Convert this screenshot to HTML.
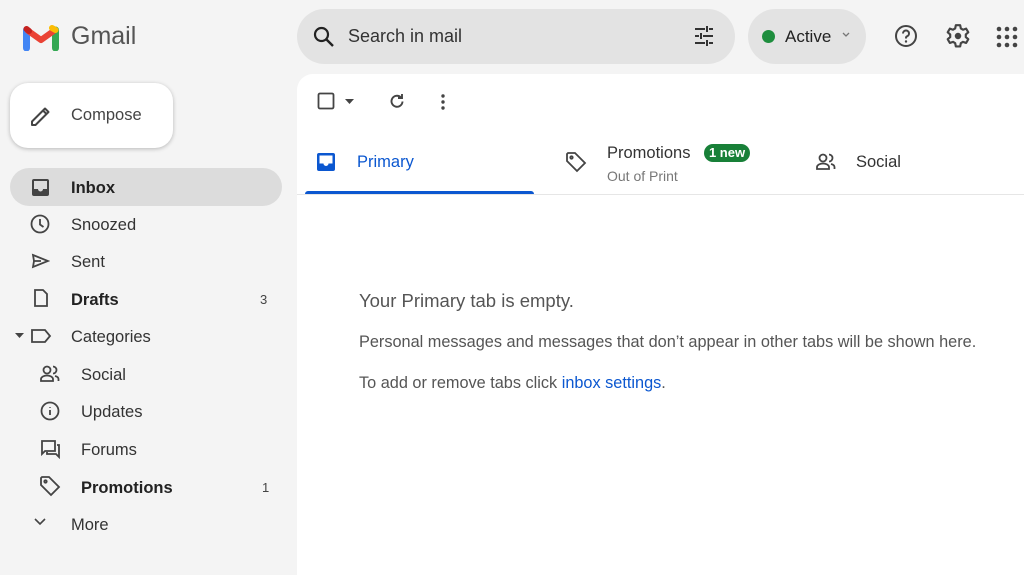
<!DOCTYPE html>
<html><head><style>
*{margin:0;padding:0;box-sizing:border-box}
body{width:1024px;height:575px;overflow:hidden;background:#f4f4f4;font-family:"Liberation Sans",sans-serif;color:#202124;position:relative}
.a{position:absolute}
.nav{position:absolute;left:71px;font-size:16.5px;color:#333;line-height:20px}
.ic{position:absolute;fill:none;stroke:#444;stroke-width:1.8}
.b{font-weight:bold;color:#222}
</style></head><body>
<!-- logo -->
<svg class="a" style="left:23px;top:25px" width="36" height="26" viewBox="0 0 36 26">
<path d="M3.5 23V5" stroke="#4285f4" stroke-width="7" stroke-linecap="round"/>
<path d="M32.5 23V5" stroke="#34a853" stroke-width="7" stroke-linecap="round"/>
<path d="M4 5L18 15L32 5" stroke="#ea4335" stroke-width="6" fill="none" stroke-linejoin="round"/>
<path d="M29 3L32.5 5" stroke="#fbbc04" stroke-width="6" stroke-linecap="round"/>
<path d="M3.5 4L6 6" stroke="#c5221f" stroke-width="6" stroke-linecap="round"/>
</svg>
<div class="a" style="left:71px;top:22px;font-size:25px;color:#555">Gmail</div>
<!-- search -->
<div class="a" style="left:297px;top:9px;width:438px;height:55px;border-radius:28px;background:#e3e3e3"></div>
<svg class="ic" style="left:312px;top:25px" width="24" height="24" viewBox="0 0 24 24"><circle cx="9.5" cy="9.5" r="6.5" stroke="#222" stroke-width="2.2"/><path d="M14.5 14.5L21 21" stroke="#222" stroke-width="2.4"/></svg>
<div class="a" style="left:348px;top:26px;font-size:18px;color:#333">Search in mail</div>
<svg class="ic" style="left:692px;top:24px" width="24" height="24" viewBox="0 0 24 24"><path d="M3 5h10M17 5h4M15 2v6M3 12h4M11 12h10M9 9v6M3 19h10M17 19h4M15 16v6" stroke="#333" stroke-width="2"/></svg>
<div class="a" style="left:748px;top:9px;width:118px;height:55px;border-radius:28px;background:#e3e3e3"></div>
<div class="a" style="left:762px;top:30px;width:13px;height:13px;border-radius:50%;background:#1e8e3e"></div>
<div class="a" style="left:785px;top:27px;font-size:17px;color:#222">Active</div>
<svg class="ic" style="left:841px;top:31px" width="10" height="8" viewBox="0 0 10 8"><path d="M2 2l3 3 3-3" stroke="#777" stroke-width="1.3"/></svg>
<svg class="ic" style="left:894px;top:24px" width="24" height="24" viewBox="0 0 24 24"><circle cx="12" cy="12" r="10" stroke="#444" stroke-width="2"/><path d="M9 9.5a3 3 0 1 1 4 2.8c-.8.4-1 1-1 1.7v.5" stroke="#444" stroke-width="2"/><circle cx="12" cy="17.5" r="1.2" fill="#444" stroke="none"/></svg>
<svg class="ic" style="left:945px;top:23px" width="26" height="26" viewBox="0 0 24 24"><path d="M10 2h4l.6 3 2 1.2 2.9-1 2 3.4-2.3 2v2.4l2.3 2-2 3.4-2.9-1-2 1.2-.6 3h-4l-.6-3-2-1.2-2.9 1-2-3.4 2.3-2v-2.4l-2.3-2 2-3.4 2.9 1 2-1.2z" stroke="#444" stroke-width="2" stroke-linejoin="round"/><circle cx="12" cy="12" r="3" fill="#444" stroke="none"/></svg>
<svg class="a" style="left:996px;top:26px" width="22" height="22" viewBox="0 0 22 22" fill="#444"><circle cx="3" cy="3" r="2.3"/><circle cx="11" cy="3" r="2.3"/><circle cx="19" cy="3" r="2.3"/><circle cx="3" cy="11" r="2.3"/><circle cx="11" cy="11" r="2.3"/><circle cx="19" cy="11" r="2.3"/><circle cx="3" cy="19" r="2.3"/><circle cx="11" cy="19" r="2.3"/><circle cx="19" cy="19" r="2.3"/></svg>
<!-- compose -->
<div class="a" style="left:10px;top:83px;width:163px;height:65px;border-radius:18px;background:#fff;box-shadow:0 1px 4px rgba(0,0,0,.25)"></div>
<svg class="ic" style="left:29px;top:104px" width="24" height="24" viewBox="0 0 24 24"><path d="M3 21v-3.5L16 4.5l3.5 3.5L6.5 21zM14 6.5l3.5 3.5" stroke="#444" stroke-width="2" stroke-linejoin="round"/></svg>
<div class="a" style="left:71px;top:106px;font-size:16.5px;color:#444">Compose</div>
<!-- nav -->
<div class="a" style="left:10px;top:168px;width:272px;height:38px;border-radius:19px;background:#dcdcdc"></div>
<svg class="a" style="left:31px;top:178px" width="19" height="19" viewBox="0 0 19 19"><rect x="1" y="1" width="17" height="17" rx="2" fill="#444"/><path d="M3 3h13v8h-4a2.5 2.5 0 0 1-5 0H3z" fill="#dcdcdc"/></svg>
<div class="nav b" style="top:178px">Inbox</div>
<svg class="ic" style="left:30px;top:214px" width="20" height="20" viewBox="0 0 20 20"><circle cx="10" cy="10" r="8.5"/><path d="M10 5v5.5l3.5 2.5"/></svg>
<div class="nav" style="top:215px">Snoozed</div>
<svg class="ic" style="left:30px;top:251px" width="20" height="20" viewBox="0 0 20 20"><path d="M3 4l15 6-15 6 1-6zM4 10h7"/></svg>
<div class="nav" style="top:252px">Sent</div>
<svg class="ic" style="left:31px;top:288px" width="20" height="20" viewBox="0 0 20 20"><path d="M4 2h8l4 4v12H4z"/></svg>
<div class="nav b" style="top:290px">Drafts</div>
<div class="a" style="left:260px;top:292px;font-size:13px;color:#444">3</div>
<svg class="a" style="left:15px;top:333px" width="9" height="6" viewBox="0 0 9 6"><path d="M0 0h9L4.5 5z" fill="#444"/></svg>
<svg class="ic" style="left:30px;top:326px" width="22" height="20" viewBox="0 0 22 20"><path d="M2 4h13l5 6-5 6H2z"/></svg>
<div class="nav" style="top:327px">Categories</div>
<svg class="ic" style="left:39px;top:364px" width="22" height="20" viewBox="0 0 22 20"><circle cx="8" cy="6" r="3.5"/><path d="M2 17v-2c0-2 3-3.5 6-3.5s6 1.5 6 3.5v2zM14 2.5a3.5 3.5 0 0 1 0 7M16 12c2 .5 3.5 1.5 3.5 3v2"/></svg>
<div class="nav" style="top:365px;left:81px">Social</div>
<svg class="ic" style="left:40px;top:401px" width="20" height="20" viewBox="0 0 20 20"><circle cx="10" cy="10" r="8.5"/><path d="M10 9v5M10 6v.8"/></svg>
<div class="nav" style="top:402px;left:81px">Updates</div>
<svg class="ic" style="left:40px;top:439px" width="22" height="20" viewBox="0 0 22 20"><path d="M2 2h13v10H5l-3 3zM17 6h2v12l-3-3H7v-2"/></svg>
<div class="nav" style="top:440px;left:81px">Forums</div>
<svg class="ic" style="left:39px;top:475px" width="22" height="22" viewBox="0 0 22 22"><path d="M2 3v7l10 10 8-8L10 2H3z"/><circle cx="6.5" cy="6.5" r="1.2"/></svg>
<div class="nav b" style="top:478px;left:81px">Promotions</div>
<div class="a" style="left:262px;top:480px;font-size:13px;color:#444">1</div>
<svg class="ic" style="left:34px;top:518px" width="12" height="8" viewBox="0 0 12 8"><path d="M1 1l5 5 5-5" stroke-width="1.6"/></svg>
<div class="nav" style="top:515px">More</div>
<!-- main -->
<div class="a" style="left:297px;top:74px;width:727px;height:501px;background:#fff;border-top-left-radius:16px"></div>
<svg class="ic" style="left:317px;top:92px" width="18" height="18" viewBox="0 0 18 18"><rect x="1.5" y="1.5" width="15" height="15" rx="1.5" stroke="#444" stroke-width="1.8"/></svg>
<svg class="a" style="left:345px;top:99px" width="9" height="5" viewBox="0 0 9 5"><path d="M0 0h9L4.5 5z" fill="#444"/></svg>
<svg class="ic" style="left:388px;top:92px" width="18" height="18" viewBox="0 0 18 18"><path d="M14.5 9.5a5.5 5.5 0 1 1-1.8-4.3M14 2v4h-4" stroke-width="1.9"/></svg>
<svg class="a" style="left:440px;top:93px" width="6" height="18" viewBox="0 0 6 18" fill="#444"><circle cx="3" cy="3" r="1.7"/><circle cx="3" cy="9" r="1.7"/><circle cx="3" cy="15" r="1.7"/></svg>
<!-- tabs -->
<svg class="a" style="left:317px;top:153px" width="18" height="18" viewBox="0 0 18 18"><rect x="0" y="0" width="18" height="18" rx="2" fill="#0b57d0"/><path d="M2.5 2.5h13v8h-4a2.5 2.5 0 0 1-5 0h-4z" fill="#fff"/></svg>
<div class="a" style="left:357px;top:153px;font-size:16.5px;color:#0b57d0;font-weight:500">Primary</div>
<div class="a" style="left:305px;top:191px;width:229px;height:4px;background:#0b57d0;border-radius:3px 3px 0 0"></div>
<div class="a" style="left:297px;top:194px;width:727px;height:1px;background:#e6e6e6"></div>
<svg class="ic" style="left:565px;top:151px" width="22" height="22" viewBox="0 0 22 22"><path d="M2 3v7l10 10 8-8L10 2H3z"/><circle cx="6.5" cy="6.5" r="1.2"/></svg>
<div class="a" style="left:607px;top:144px;font-size:16.5px;color:#333">Promotions</div>
<div class="a" style="left:704px;top:144px;width:46px;height:18px;border-radius:9px;background:#188038;color:#fff;font-size:13px;font-weight:bold;text-align:center;line-height:18px">1 new</div>
<div class="a" style="left:607px;top:168px;font-size:14px;color:#777">Out of Print</div>
<svg class="ic" style="left:815px;top:152px" width="22" height="20" viewBox="0 0 22 20"><circle cx="8" cy="6" r="3.5"/><path d="M2 17v-2c0-2 3-3.5 6-3.5s6 1.5 6 3.5v2zM14 2.5a3.5 3.5 0 0 1 0 7M16 12c2 .5 3.5 1.5 3.5 3v2"/></svg>
<div class="a" style="left:856px;top:153px;font-size:16.5px;color:#333">Social</div>
<!-- empty -->
<div class="a" style="left:359px;top:290px;font-size:18.5px;color:#555">Your Primary tab is empty.</div>
<div class="a" style="left:359px;top:333px;font-size:16.3px;color:#555">Personal messages and messages that don’t appear in other tabs will be shown here.</div>
<div class="a" style="left:359px;top:374px;font-size:16.3px;color:#555">To add or remove tabs click <span style="color:#0b57d0">inbox settings</span>.</div>
</body></html>
